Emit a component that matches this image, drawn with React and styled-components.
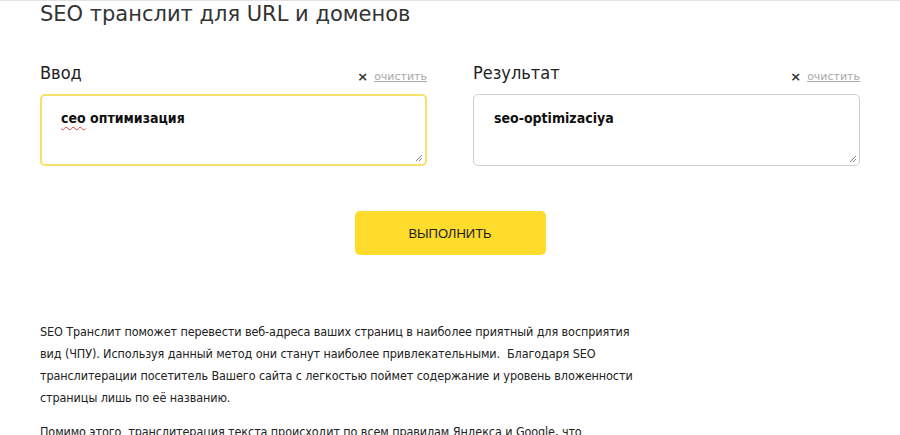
import React from "react";
import styled, { createGlobalStyle } from "styled-components";

const Global = createGlobalStyle`
  html, body { margin: 0; padding: 0; background: #fff; }
  body { font-family: "DejaVu Sans Condensed", "DejaVu Sans", Verdana, sans-serif; color: #222; }
  * { box-sizing: border-box; }
`;

const Page = styled.div`
  width: 900px;
  height: 435px;
  overflow: hidden;
  border-top: 1px solid #e2e2e2;
  padding: 0 40px;
`;

const Title = styled.h1`
  margin: 0;
  margin-top: -1px;
  font-family: "DejaVu Sans", Verdana, sans-serif;
  font-size: 21px;
  font-weight: normal;
  line-height: 28px;
  color: #333;
`;

const Columns = styled.div`
  display: grid;
  grid-template-columns: 387px 387px;
  column-gap: 46px;
  margin-top: 30px;
`;

const Column = styled.div`
  display: flex;
  flex-direction: column;
`;

const Head = styled.div`
  display: flex;
  justify-content: space-between;
  align-items: flex-end;
  height: 26px;
  margin-bottom: 10px;
`;

const Label = styled.div`
  font-size: 18px;
  line-height: 22px;
  color: #222;
`;

const Clear = styled.div`
  display: flex;
  align-items: center;
  gap: 6px;
  font-family: "DejaVu Sans", Verdana, sans-serif;
  font-size: 11px;
  line-height: 14px;
`;

const Cross = styled.span`
  font-size: 13px;
  font-weight: bold;
  color: #333;
`;

const ClearLink = styled.a`
  color: #a8a8a8;
  text-decoration: underline;
`;

const Box = styled.div`
  position: relative;
  height: 72px;
  border: ${(p) => (p.$active ? "2px solid #f6e26a" : "1px solid #cfcfcf")};
  border-radius: 5px;
  padding: ${(p) => (p.$active ? "13px 19px" : "14px 20px")};
  font-size: 14px;
  font-weight: bold;
  line-height: 18px;
  color: #111;
`;

const Grip = styled.svg`
  position: absolute;
  right: 2px;
  bottom: 2px;
`;

const Spell = styled.span`
  text-decoration: underline wavy #e04040;
  text-decoration-thickness: 1px;
  text-underline-offset: 3px;
`;

const Actions = styled.div`
  display: flex;
  justify-content: center;
  margin-top: 45px;
`;

const Button = styled.button`
  width: 191px;
  height: 44px;
  border: none;
  border-radius: 5px;
  background: #fddc2b;
  font-family: "Liberation Sans", Arial, sans-serif;
  font-size: 13px;
  color: #222;
`;

const Text = styled.div`
  margin-top: 66px;
  width: 600px;
  font-size: 12.5px;
  letter-spacing: -0.1px;
  line-height: 22px;
  color: #222;
`;

const P = styled.p`
  margin: 0 0 12px;
`;

function ResizeGrip() {
  return (
    <Grip width="8" height="8" viewBox="0 0 8 8">
      <path d="M7 1 L1 7 M7 4 L4 7" stroke="#888" strokeWidth="1" />
    </Grip>
  );
}

function Field({ label, active, children }) {
  return (
    <Column>
      <Head>
        <Label>{label}</Label>
        <Clear>
          <Cross>×</Cross>
          <ClearLink>очистить</ClearLink>
        </Clear>
      </Head>
      <Box $active={active}>
        {children}
        <ResizeGrip />
      </Box>
    </Column>
  );
}

export default function App() {
  return (
    <>
      <Global />
      <Page>
        <Title>SEO транслит для URL и доменов</Title>
        <Columns>
          <Field label="Ввод" active>
            <Spell>сео</Spell> оптимизация
          </Field>
          <Field label="Результат">seo-optimizaciya</Field>
        </Columns>
        <Actions>
          <Button>ВЫПОЛНИТЬ</Button>
        </Actions>
        <Text>
          <P>
            SEO Транслит поможет перевести веб-адреса ваших страниц в наиболее приятный для восприятия вид (ЧПУ). Используя данный метод они станут наиболее привлекательными.&nbsp; Благодаря SEO транслитерации посетитель Вашего сайта с легкостью поймет содержание и уровень вложенности страницы лишь по её названию.
          </P>
          <P>
            Помимо этого&nbsp; транслитерация текста происходит по всем правилам Яндекса и Google, что
          </P>
        </Text>
      </Page>
    </>
  );
}
